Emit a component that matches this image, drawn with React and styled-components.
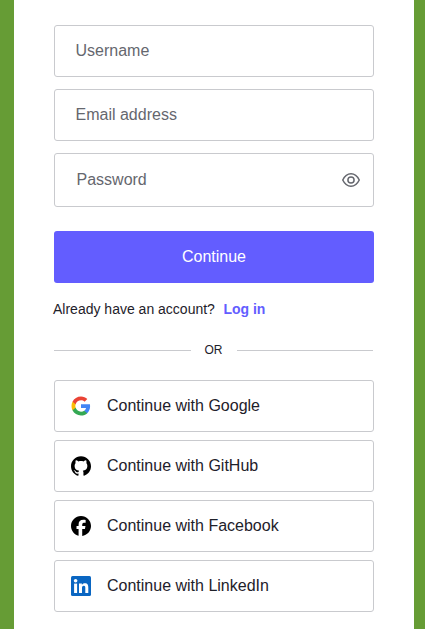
import styled, { createGlobalStyle } from "styled-components";
import { SiGithub, SiFacebook } from "react-icons/si";

const GlobalStyle = createGlobalStyle`
  html, body {
    margin: 0;
    padding: 0;
    height: 100%;
    overflow: hidden;
    background: #669c35;
    font-family: "Liberation Sans", Arial, sans-serif;
  }
`;

const GoogleIcon = () => (
  <svg width="20" height="20" viewBox="0 0 24 24">
    <path fill="#4285f4" d="M22.9 12.3c0-.8-.1-1.6-.2-2.3H12v4.4h6.1c-.3 1.4-1.1 2.6-2.3 3.4v2.8h3.7c2.2-2 3.4-5 3.4-8.3z" />
    <path fill="#34a853" d="M12 23.4c3.1 0 5.7-1 7.5-2.8l-3.7-2.8c-1 .7-2.3 1.1-3.8 1.1-3 0-5.5-2-6.4-4.7H1.8v2.9c1.9 3.8 5.8 6.3 10.2 6.3z" />
    <path fill="#fbbc05" d="M5.6 14.2c-.2-.7-.4-1.4-.4-2.2s.1-1.5.4-2.2V6.9H1.8C1 8.4.6 10.2.6 12s.4 3.6 1.2 5.1l3.8-2.9z" />
    <path fill="#ea4335" d="M12 5.1c1.7 0 3.2.6 4.3 1.7l3.3-3.3C17.7 1.7 15.1.6 12 .6 7.6.6 3.7 3.1 1.8 6.9l3.8 2.9C6.5 7.1 9 5.1 12 5.1z" />
  </svg>
);

const LinkedInIcon = () => (
  <svg width="20" height="20" viewBox="0 0 20 20">
    <rect width="20" height="20" rx="1.5" fill="#0a66c2" />
    <circle cx="4.6" cy="4.8" r="1.8" fill="#fff" />
    <rect x="3.1" y="7.6" width="3" height="9.4" fill="#fff" />
    <path fill="#fff" d="M8 7.6h2.9v1.3c.5-.9 1.6-1.6 3-1.6 2.9 0 3.4 1.9 3.4 4.4V17h-3v-4.7c0-1.2 0-2.5-1.5-2.5s-1.8 1.2-1.8 2.4V17H8z" />
  </svg>
);

const EyeIcon = () => (
  <svg width="20" height="20" viewBox="0 0 24 24" fill="none" stroke="#65676e" strokeWidth="1.8">
    <path d="M2.1 12C4.5 7 7.8 4.5 12 4.5S19.5 7 21.9 12C19.5 17 16.2 19.5 12 19.5S4.5 17 2.1 12Z" />
    <circle cx="12" cy="12" r="3.7" />
  </svg>
);

const providers = [
  { name: "Google", icon: <GoogleIcon /> },
  { name: "GitHub", icon: <SiGithub size={20} color="#000" /> },
  { name: "Facebook", icon: <SiFacebook size={20} color="#000" /> },
  { name: "LinkedIn", icon: <LinkedInIcon /> },
];

const App = () => {
  return (
    <>
      <GlobalStyle />
      <Page>
        <Card>
          <Form>
            <Field>
              <Input placeholder="Username" />
            </Field>
            <Field>
              <Input placeholder="Email address" />
            </Field>
            <Field $tall>
              <Input $tall placeholder="Password" type="password" />
              <EyeButton type="button" aria-label="Show password">
                <EyeIcon />
              </EyeButton>
            </Field>
          </Form>
          <PrimaryButton type="button">Continue</PrimaryButton>
          <LoginRow>
            Already have an account?<LoginLink href="#">Log in</LoginLink>
          </LoginRow>
          <Divider>
            <Line />
            <DividerText>OR</DividerText>
            <Line />
          </Divider>
          <Socials>
            {providers.map((p) => (
              <SocialButton type="button" key={p.name}>
                <IconSlot>{p.icon}</IconSlot>
                Continue with {p.name}
              </SocialButton>
            ))}
          </Socials>
        </Card>
      </Page>
    </>
  );
};

const Page = styled.div`
  height: 629px;
  padding: 0 11px 0 14px;
  box-sizing: border-box;
  background: #669c35;
`;

const Card = styled.div`
  height: 100%;
  background: #fff;
  padding: 25px 40px 0;
  box-sizing: border-box;
`;

const Form = styled.div`
  display: flex;
  flex-direction: column;
  gap: 12px;
`;

const Field = styled.div`
  position: relative;
  height: ${(p) => (p.$tall ? "54px" : "52px")};
`;

const Input = styled.input`
  display: block;
  width: 100%;
  height: 100%;
  box-sizing: border-box;
  border: 1px solid #c9cace;
  border-radius: 3px;
  outline: none;
  padding: ${(p) => (p.$tall ? "0 48px 0 21.5px" : "0 16px 0 20.5px")};
  font-family: inherit;
  font-size: 16px;
  color: #1e212a;

  &::placeholder {
    color: #65676e;
    opacity: 1;
  }
`;

const EyeButton = styled.button`
  position: absolute;
  top: 17px;
  right: 13px;
  width: 20px;
  height: 20px;
  padding: 0;
  border: none;
  background: none;
  display: flex;
`;

const PrimaryButton = styled.button`
  display: block;
  width: 100%;
  height: 52px;
  margin-top: 24px;
  border: none;
  border-radius: 3px;
  background: #635dff;
  color: #fff;
  font-family: inherit;
  font-size: 16px;
`;

const LoginRow = styled.p`
  margin: 18px 0 0 -1px;
  font-size: 14px;
  line-height: 17px;
  color: #1e212a;
`;

const LoginLink = styled.a`
  margin-left: 8.5px;
  color: #635dff;
  font-weight: 700;
  text-decoration: none;
`;

const Divider = styled.div`
  display: flex;
  align-items: center;
  margin-top: 24px;
  height: 16px;
  padding-right: 1px;
`;

const Line = styled.span`
  flex: 1;
  height: 1px;
  background: #c9cace;
`;

const DividerText = styled.span`
  padding: 0 14px;
  font-size: 12px;
  color: #1e212a;
`;

const Socials = styled.div`
  display: flex;
  flex-direction: column;
  gap: 8px;
  margin-top: 22px;
`;

const SocialButton = styled.button`
  display: flex;
  align-items: center;
  width: 100%;
  height: 52px;
  padding: 0 0 0 16px;
  box-sizing: border-box;
  border: 1px solid #c9cace;
  border-radius: 3px;
  background: #fff;
  color: #1e212a;
  font-family: inherit;
  font-size: 16px;
`;

const IconSlot = styled.span`
  display: flex;
  width: 20px;
  height: 20px;
  margin-right: 16px;
`;

export default App;
